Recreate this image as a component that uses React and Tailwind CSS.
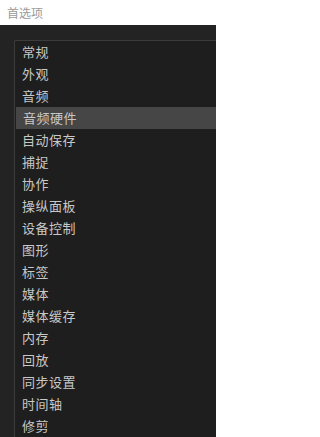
const items = [
  "常规",
  "外观",
  "音频",
  "音频硬件",
  "自动保存",
  "捕捉",
  "协作",
  "操纵面板",
  "设备控制",
  "图形",
  "标签",
  "媒体",
  "媒体缓存",
  "内存",
  "回放",
  "同步设置",
  "时间轴",
  "修剪",
];

export default function App() {
  const selected = 3;

  return (
    <div
      className="w-[216px] h-[437px] overflow-hidden flex flex-col bg-[#232323]"
      style={{ fontFamily: '"Noto Sans CJK SC", "Noto Sans", sans-serif' }}
    >
      {/* title bar */}
      <div className="h-[25px] shrink-0 bg-white flex items-center px-[7px]">
        <span className="text-[12px] leading-none text-[#9a9a9a]">首选项</span>
      </div>

      {/* list panel */}
      <div className="flex-1 pt-[15px] pl-[14px]">
        <div className="h-full border-t border-l border-[#3c3c3c] bg-[#1e1e1e] rounded-tl-[2px]">
          {items.map((name, i) => (
            <div
              key={name}
              className={`h-[22px] flex items-center pl-[7px] text-[13px] tracking-[0.5px] text-[#c8c8c8] ${
                i === selected ? "bg-[#464646] ml-[1px] pl-[6px]" : ""
              }`}
            >
              {name}
            </div>
          ))}
        </div>
      </div>
    </div>
  );
}
